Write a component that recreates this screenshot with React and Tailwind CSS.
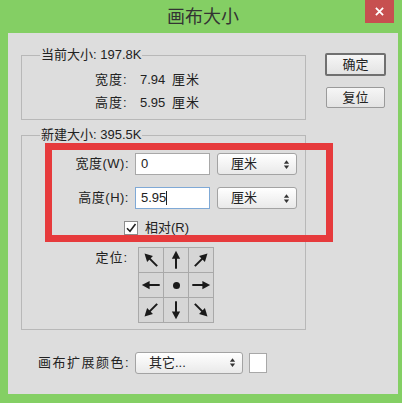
import React from 'react';

const font = { fontFamily: '"Liberation Sans","Noto Sans CJK SC",sans-serif' };

const Arrow = ({ deg }) => (
  <svg viewBox="0 0 24 24" className="w-[22px] h-[22px]">
    <g transform={`rotate(${deg} 12 12)`}>
      <line x1="12" y1="21.5" x2="12" y2="8" stroke="#1a1a1a" strokeWidth="2.2" />
      <polygon points="12,2 7.5,10.5 16.5,10.5" fill="#1a1a1a" />
    </g>
  </svg>
);

const Spinner = () => (
  <svg viewBox="0 0 8 12" className="w-[7px] h-[11px]">
    <polygon points="4,1 7,5 1,5" fill="#333" />
    <polygon points="4,11 7,7 1,7" fill="#333" />
  </svg>
);

const Select = ({ text, w }) => (
  <div className={`${w} h-[22px] flex items-center justify-between pl-[13px] pr-[6px] border border-[#a3a3a3] rounded-[3px] bg-gradient-to-b from-[#ffffff] to-[#e9e9e9] text-[13px] text-[#222]`}>
    <span>{text}</span>
    <Spinner />
  </div>
);

export default function App() {
  const cells = [-45, 0, 45, 270, null, 90, 225, 180, 135];
  return (
    <div className="relative w-[402px] h-[403px] bg-[#84cf64] flex flex-col" style={font}>
      {/* title bar */}
      <div className="h-[33px] flex items-center justify-center relative">
        <span className="text-[18px] text-[#333] pl-[4px] pt-[2px]">画布大小</span>
        <div className="absolute right-[8px] top-0 w-[29px] h-[23px] bg-[#c75050] flex items-center justify-center">
          <svg viewBox="0 0 10 10" className="w-[9px] h-[9px]">
            <path d="M1 1 L9 9 M9 1 L1 9" stroke="#fff" strokeWidth="2" />
          </svg>
        </div>
      </div>

      {/* body */}
      <div className="mx-[8px] mr-[4px] h-[361px] bg-[#dddddd] flex text-[13px] text-[#222]">
        <div className="w-[285px] ml-[13px] flex flex-col pt-[14px]">
          <fieldset className="border border-[#b8b8b8] pb-[6px]">
            <legend className="ml-[18px] px-[1px] leading-[16px]">当前大小: 197.8K</legend>
            <div className="mt-[7px] pl-[73px] flex flex-col gap-[3px]">
              <div className="h-[20px] flex items-center">
                <span className="w-[45px] tracking-[1px]">宽度:</span>
                <span className="w-[32px]">7.94</span>
                <span className="tracking-[1px]">厘米</span>
              </div>
              <div className="h-[20px] flex items-center">
                <span className="w-[45px] tracking-[1px]">高度:</span>
                <span className="w-[32px]">5.95</span>
                <span className="tracking-[1px]">厘米</span>
              </div>
            </div>
          </fieldset>

          <fieldset className="mt-[7px] border border-[#b8b8b8] pb-[6px]">
            <legend className="ml-[18px] px-[1px] leading-[16px]">新建大小: 395.5K</legend>
            <div className="mt-[10px] flex items-center h-[22px]">
              <span className="w-[109px] text-right pr-[2px] tracking-[0.5px]">宽度(W):</span>
              <div className="ml-[4px] w-[75px] h-[22px] bg-white border border-[#a8a8a8] flex items-center pl-[5px]">0</div>
              <div className="ml-[7px]"><Select text="厘米" w="w-[80px]" /></div>
            </div>
            <div className="mt-[12px] flex items-center h-[22px]">
              <span className="w-[109px] text-right pr-[2px] tracking-[0.5px]">高度(H):</span>
              <div className="ml-[4px] w-[75px] h-[22px] bg-white border border-[#7fa9d6] flex items-center pl-[5px]">
                5.95<span className="inline-block w-px h-[14px] bg-[#222]"></span>
              </div>
              <div className="ml-[7px]"><Select text="厘米" w="w-[80px]" /></div>
            </div>
            <div className="mt-[11px] flex items-center h-[15px] pl-[102px] gap-[7px]">
              <div className="w-[14px] h-[14px] bg-white border border-[#8c8c8c] flex items-center justify-center">
                <svg viewBox="0 0 12 12" className="w-[12px] h-[12px]">
                  <path d="M2 6.2 L5 9.2 L10.5 2" fill="none" stroke="#222" strokeWidth="1.6" />
                </svg>
              </div>
              <span>相对(R)</span>
            </div>
            <div className="mt-[12px] flex items-start">
              <span className="w-[109px] text-right pr-[3px] mt-[1px] tracking-[1px]">定位:</span>
              <div className="ml-[7px] grid grid-cols-3 gap-px bg-[#a9a9a9] border border-[#a9a9a9]">
                {cells.map((d, i) => (
                  <div key={i} className="w-[24px] h-[24px] bg-[#d6d6d6] flex items-center justify-center">
                    {d === null ? <div className="w-[7px] h-[7px] rounded-full bg-[#1a1a1a]" /> : <Arrow deg={d} />}
                  </div>
                ))}
              </div>
            </div>
          </fieldset>

          <div className="mt-[22px] pl-[17px] flex items-center h-[21px]">
            <span className="w-[97px] tracking-[1.5px]">画布扩展颜色:</span>
            <Select text="其它..." w="w-[108px]" />
            <div className="ml-[6px] w-[18px] h-[20px] bg-white border border-[#a8a8a8]" />
          </div>
        </div>

        <div className="ml-[19px] pt-[20px] flex flex-col items-start">
          <button className="w-[61px] h-[23px] border-2 border-[#707070] rounded-[2px] bg-gradient-to-b from-[#f6f6f6] to-[#e3e3e3] text-[13px] flex items-center justify-center">确定</button>
          <button className="mt-[11px] ml-[1px] w-[59px] h-[21px] border border-[#9a9a9a] rounded-[2px] bg-gradient-to-b from-[#f6f6f6] to-[#e3e3e3] text-[13px] flex items-center justify-center">复位</button>
        </div>
      </div>

      {/* red annotation */}
      <div className="absolute left-[45px] top-[143px] w-[288px] h-[99px] border-[7px] border-[#e63a3c] pointer-events-none" />
    </div>
  );
}
